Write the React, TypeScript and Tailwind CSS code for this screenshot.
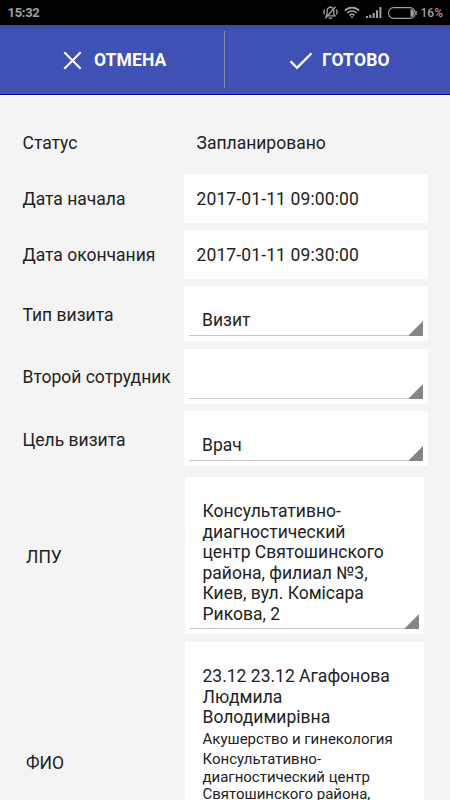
import type { ReactNode } from 'react'

type FieldRow = {
  label: string
  value: string
}

const dateRows: FieldRow[] = [
  { label: 'Дата начала', value: '2017-01-11 09:00:00' },
  { label: 'Дата окончания', value: '2017-01-11 09:30:00' }
]

const spinnerRows: FieldRow[] = [
  { label: 'Тип визита', value: 'Визит' },
  { label: 'Второй сотрудник', value: '' },
  { label: 'Цель визита', value: 'Врач' }
]

const StatusBar = () => (
  <div className="flex h-[25px] items-center bg-black pr-[7px] pl-[7.5px] text-[#a0a0a0]">
    <span className="text-[13px] leading-[15px] font-bold tracking-[-0.3px]">15:32</span>

    <svg className="ml-auto" width="15" height="15" viewBox="0 0 15 15" fill="none" stroke="currentColor" strokeWidth="1.3">
      <path d="M3.2 10.8h8.8l-1.2-1.7V5.8C10.8 3.6 9.4 2.4 7.5 2.4S4.2 3.6 4.2 5.8v3.3z" />
      <path d="M7.5 2.4V1M6 12.5c.3 1.2 2.7 1.2 3 0M2.3 13.2L12.5 1.7M1.7 4.5C.8 6 .8 8 1.7 9.5M13.3 4.5c.9 1.5.9 3.5 0 5" />
    </svg>

    <svg className="ml-[6px]" width="16" height="13" viewBox="0 0 16 13" fill="none" stroke="currentColor" strokeWidth="1.7">
      <path d="M.8 4.6c4-4 10.4-4 14.4 0M3.2 7c2.7-2.7 6.9-2.7 9.6 0M5.5 9.3c1.4-1.4 3.6-1.4 5 0" />
      <path d="M6.3 10.3h3.4L8 12.3z" fill="currentColor" stroke="none" />
    </svg>

    <svg className="ml-[6px]" width="16" height="11" viewBox="0 0 16 11" fill="currentColor">
      <path d="M0 9h2v2H0zM3.4 7.8h2V11h-2zM6.7 6h2v5h-2zM10 3.3h2V11h-2zM13.4 0h2v11h-2z" />
    </svg>

    <svg className="ml-[6px]" width="29" height="12" viewBox="0 0 29 12" fill="none" stroke="currentColor">
      <rect x=".6" y=".6" width="26.5" height="10.8" rx="5" strokeWidth="1.1" />
      <path d="M22.5 2.2h1c1.6 0 2.4 1.5 2.4 3.8s-.8 3.8-2.4 3.8h-1z" fill="currentColor" stroke="none" />
      <path d="M28.1 4v4" strokeWidth="1.2" />
    </svg>

    <span className="ml-[3.500px] pt-px text-[12px] leading-[15px] font-medium">16%</span>
  </div>
)

const ActionBar = () => (
  <div className="flex h-[70px] border-b border-[#0000a8] bg-[#3f51b5] bg-linear-to-b from-[#394999] to-[#3f51b5] to-10% text-[17.5px] leading-[21px] font-bold text-white">
    <button className="flex flex-1 items-center pt-[2px] pl-[63px]">
      <svg width="19" height="19" viewBox="0 0 19 19" fill="none" stroke="currentColor" strokeWidth="2.1">
        <path d="M1.3 1.3l16.4 16.4M17.7 1.3L1.3 17.7" />
      </svg>
      <span className="ml-[12px] tracking-[0.1px]">ОТМЕНА</span>
    </button>
    <div className="my-[6px] w-px bg-[#8488a8]" />
    <button className="flex flex-1 items-center pt-[2px] pl-[64px]">
      <svg width="24" height="19" viewBox="0 0 24 19" fill="none" stroke="currentColor" strokeWidth="2.3">
        <path d="M1.500 10.300l6.500 6.500L22.500 2.200" />
      </svg>
      <span className="ml-[9px] tracking-[0.2px]">ГОТОВО</span>
    </button>
  </div>
)

const SpinnerLine = () => (
  <div className="flex h-[16px] items-end">
    <div className="h-px flex-1 bg-[#c8c8c8]" />
    <svg width="15" height="15" viewBox="0 0 15 15" fill="#858585">
      <path d="M15 0v15H0z" />
    </svg>
  </div>
)

const LargeField = ({ label, className, children }: { label: string, className: string, children: ReactNode }) => (
  <div className={ `flex pl-[26px] ${className}` }>
    <div className="flex w-[159px] items-center pt-[2px]">{ label }</div>
    <div className="flex w-[239px] flex-col bg-white px-[5px] pb-[5px]">{ children }</div>
  </div>
)

const App = () => (
  <div className="h-[800px] overflow-hidden bg-[#f4f4f4] font-['Roboto',sans-serif] text-[17.5px] leading-[20.5px] text-[#222]">
    <StatusBar />
    <ActionBar />

    <div className="border-t border-white pt-[30px]">
      <div className="flex h-[48px] items-center pl-[22.5px]">
        <div className="w-[174px] pb-[14px]">Статус</div>
        <div className="pb-[14px]">Запланировано</div>
      </div>

      <div className="flex flex-col gap-[7.5px]">
        { dateRows.map((row) => (
          <div key={ row.label } className="flex h-[48.7px] pl-[22.5px]">
            <div className="flex w-[161.5px] items-center pt-[2px]">{ row.label }</div>
            <div className="flex w-[243.5px] items-center bg-white pt-[2px] pl-[12.5px] tracking-[0.12px]">{ row.value }</div>
          </div>
        )) }

        { spinnerRows.map((row) => (
          <div key={ row.label } className="flex h-[55px] pl-[22.5px]">
            <div className="flex w-[161.5px] items-center pt-[2px] whitespace-nowrap">{ row.label }</div>
            <div className="flex w-[243.5px] flex-col justify-end bg-white px-[5px] pb-[5px]">
              <div className="-mb-[11px] h-[21px] pl-[13px]">{ row.value }</div>
              <SpinnerLine />
            </div>
          </div>
        )) }
      </div>

      <LargeField label="ЛПУ" className="mt-[11px] h-[157px]">
        <div className="-mb-[11px] pt-[24px] pl-[12.5px]">
          Консультативно-<br />
          диагностический<br />
          центр Святошинского<br />
          района, филиал №3,<br />
          Киев, вул. Комісара<br />
          Рикова, 2
        </div>
        <div className="mt-auto">
          <SpinnerLine />
        </div>
      </LargeField>

      <LargeField label="ФИО" className="mt-[8px] h-[240px]">
        <div className="pt-[24px] pl-[12.5px]">
          23.12 23.12 Агафонова<br />
          Людмила<br />
          Володимирівна
        </div>
        <div className="pt-[3px] pl-[12.5px] text-[15px] leading-[17.5px] whitespace-nowrap">
          <div>Акушерство и гинекология</div>
          <div className="mt-[3px]">
            Консультативно-<br />
            диагностический центр<br />
            Святошинского района,
          </div>
        </div>
      </LargeField>
    </div>
  </div>
)

export default App
